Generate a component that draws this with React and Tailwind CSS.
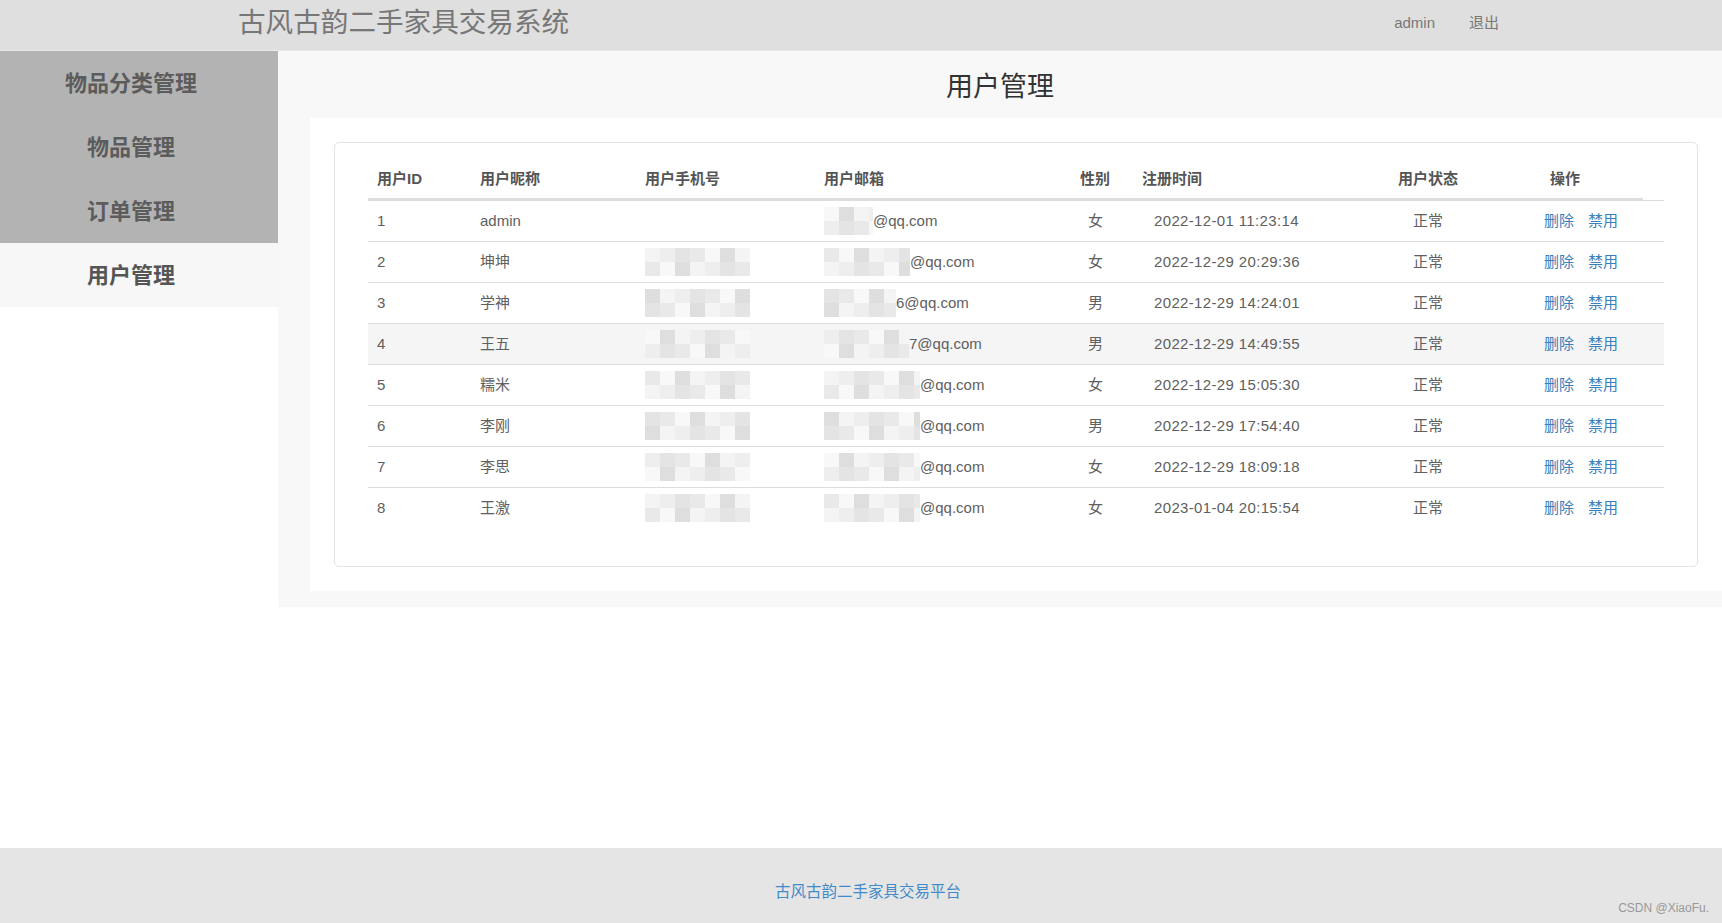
import React from 'react'

const users = [
  { id: 1, name: 'admin', phone: 0, mail: 49, tail: '@qq.com', sex: '女', time: '2022-12-01 11:23:14' },
  { id: 2, name: '坤坤', phone: 105, mail: 86, tail: '@qq.com', sex: '女', time: '2022-12-29 20:29:36' },
  { id: 3, name: '学神', phone: 105, mail: 72, tail: '6@qq.com', sex: '男', time: '2022-12-29 14:24:01' },
  { id: 4, name: '王五', phone: 105, mail: 85, tail: '7@qq.com', sex: '男', time: '2022-12-29 14:49:55' },
  { id: 5, name: '糯米', phone: 105, mail: 96, tail: '@qq.com', sex: '女', time: '2022-12-29 15:05:30' },
  { id: 6, name: '李刚', phone: 105, mail: 96, tail: '@qq.com', sex: '男', time: '2022-12-29 17:54:40' },
  { id: 7, name: '李思', phone: 105, mail: 96, tail: '@qq.com', sex: '女', time: '2022-12-29 18:09:18' },
  { id: 8, name: '王激', phone: 105, mail: 96, tail: '@qq.com', sex: '女', time: '2023-01-04 20:15:54' },
]

const shades = ['#e4e4e4', '#eeeeee', '#f4f4f4', '#dedede', '#f8f8f8', '#e9e9e9']

// pixelated blur over hidden phone / mail parts
function Mosaic({ width, seed }) {
  if (!width) return null
  const cols = Math.ceil(width / 15)
  return (
    <div className="flex flex-col overflow-hidden shrink-0" style={{ width }}>
      {[0, 1].map((r) => (
        <div key={r} className="flex">
          {Array.from({ length: cols }).map((_, c) => (
            <div
              key={c}
              className="w-[15px] h-[14px] shrink-0"
              style={{ backgroundColor: shades[(c * 5 + r * 3 + seed * 7) % shades.length] }}
            />
          ))}
        </div>
      ))}
    </div>
  )
}

const menu = ['物品分类管理', '物品管理', '订单管理']

export default function App() {
  return (
    <div className="min-h-screen flex flex-col bg-white font-['Liberation_Sans','Noto_Sans_CJK_SC',sans-serif]">
      <header className="h-[51px] shrink-0 bg-[#dfdfdf] border-b border-[#e8e8e8] flex items-center pb-[4px]">
        <div className="pl-[238px] text-[27.6px] text-[#777777] leading-none">古风古韵二手家具交易系统</div>
        <div className="ml-auto mr-[223px] flex gap-[34px] text-[15px] text-[#777777]">
          <span>admin</span>
          <span>退出</span>
        </div>
      </header>

      <div className="flex flex-1">
        <aside className="w-[278px] shrink-0">
          {menu.map((m) => (
            <div key={m} className="h-[64px] bg-[#b3b3b3] flex items-center justify-center pr-[16px] text-[22px] font-bold text-[#5c5c5c]">
              {m}
            </div>
          ))}
          <div className="h-[64px] bg-[#f7f7f7] flex items-center justify-center pr-[16px] text-[22px] font-bold text-[#555555]">
            用户管理
          </div>
        </aside>

        <main className="flex-1">
          <div className="bg-[#f8f8f8] pb-[16px]">
            <div className="h-[67px] flex items-center justify-center pt-[6px] text-[27px] text-[#333333]">用户管理</div>
            <div className="ml-[32px] bg-white p-[24px]">
              <div className="border border-[#e3e3e3] rounded-[5px] pt-[17px] px-[33px] pb-[38px]">
                <div className="flex h-[40px] items-center mr-[21px] border-b-2 border-[#dddddd] text-[15px] font-bold text-[#555555]">
                  <div className="w-[104px] shrink-0 pl-[9px]">用户ID</div>
                  <div className="w-[165px] shrink-0 pl-[8px]">用户昵称</div>
                  <div className="w-[179px] shrink-0 pl-[8px]">用户手机号</div>
                  <div className="w-[256px] shrink-0 pl-[8px]">用户邮箱</div>
                  <div className="w-[62px] shrink-0 pl-[8px]">性别</div>
                  <div className="w-[255px] shrink-0 pl-[8px]">注册时间</div>
                  <div className="w-[153px] shrink-0 pl-[9px]">用户状态</div>
                  <div className="w-[101px] shrink-0 pl-[8px]">操作</div>
                </div>
                {users.map((u) => (
                  <div
                    key={u.id}
                    className={`flex h-[41px] items-center border-t border-[#dddddd] text-[15px] text-[#606060] ${u.id === 4 ? 'bg-[#f5f5f5]' : ''}`}
                  >
                    <div className="w-[104px] shrink-0 pl-[9px]">{u.id}</div>
                    <div className="w-[165px] shrink-0 pl-[8px]">{u.name}</div>
                    <div className="w-[179px] shrink-0 pl-[8px]">
                      <Mosaic width={u.phone} seed={u.id} />
                    </div>
                    <div className="w-[256px] shrink-0 pl-[8px] flex items-center">
                      <Mosaic width={u.mail} seed={u.id + 3} />
                      <span>{u.tail}</span>
                    </div>
                    <div className="w-[62px] shrink-0 pl-[16px]">{u.sex}</div>
                    <div className="w-[255px] shrink-0 pl-[20px] tracking-[0.35px]">{u.time}</div>
                    <div className="w-[153px] shrink-0 pl-[24px]">正常</div>
                    <div className="w-[122px] shrink-0 pl-[2px] flex gap-[14px] text-[#3a80ba]">
                      <span>删除</span>
                      <span>禁用</span>
                    </div>
                  </div>
                ))}
              </div>
            </div>
          </div>
        </main>
      </div>

      <footer className="relative h-[75px] shrink-0 bg-[#e5e5e5] flex items-center justify-center pl-[14px] pt-[13px]">
        <span className="text-[15.5px] text-[#428bca]">古风古韵二手家具交易平台</span>
        <span className="absolute right-[13px] bottom-[6px] text-[12px] text-[#999999]">CSDN @XiaoFu.</span>
      </footer>
    </div>
  )
}
